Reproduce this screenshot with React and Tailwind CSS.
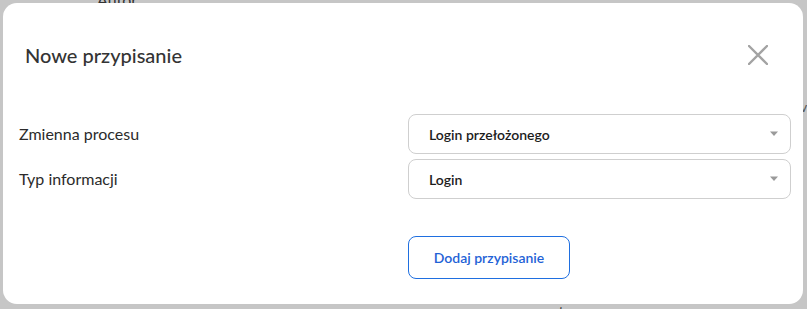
import React from 'react';

function Caret() {
  return (
    <svg width="10" height="6" viewBox="0 0 10 6" className="shrink-0">
      <path d="M1 0.5h8L5 5z" fill="#9a9a9a" />
    </svg>
  );
}

function SelectBox({ value }) {
  return (
    <div className="flex h-[40px] w-[383px] items-center justify-between rounded-[8px] border border-[#cfcfcf] bg-white pl-[20px] pr-[11px]">
      <span className="text-[14px] font-semibold text-[#1c1c1c]">{value}</span>
      <Caret />
    </div>
  );
}

export default function App() {
  return (
    <div
      className="relative h-[309px] w-[807px] overflow-hidden bg-[#c6c6c6] p-[3px]"
      style={{ fontFamily: 'Lato, "Noto Sans", sans-serif' }}
    >
      {/* page behind the overlay */}
      <span className="absolute left-[97px] top-[-12px] text-[16px] text-[#333]">Autor</span>
      <span className="absolute left-[800px] top-[96px] text-[14px] text-[#555]">v</span>
      <span className="absolute left-[552px] top-[300px] text-[14px] text-[#333]">, typ pracy</span>

      <div className="relative flex h-[301px] w-[800px] flex-col rounded-[14px] bg-white">
        <div className="flex items-center justify-between pl-[22px] pr-[35px] pt-[37px]">
          <h2 className="text-[20px] font-medium text-[#343434]">Nowe przypisanie</h2>
          <svg width="20" height="20" viewBox="0 0 20 20">
            <path d="M1 1L19 19M19 1L1 19" stroke="#a3a3a3" strokeWidth="2.4" strokeLinecap="round" />
          </svg>
        </div>

        <div className="mt-[44px] flex flex-col gap-[5px] pl-[16px]">
          <div className="flex items-center">
            <span className="w-[389px] text-[16px] text-[#2b2b2b]">Zmienna procesu</span>
            <SelectBox value="Login przełożonego" />
          </div>
          <div className="flex items-center">
            <span className="w-[389px] text-[16px] text-[#2b2b2b]">Typ informacji</span>
            <SelectBox value="Login" />
          </div>
        </div>

        <div className="mt-[37px] pl-[405px]">
          <button className="h-[43px] w-[162px] rounded-[8px] border border-[#1f6fe0] bg-white text-[14px] font-semibold text-[#1f62d6]">
            Dodaj przypisanie
          </button>
        </div>
      </div>
    </div>
  );
}
